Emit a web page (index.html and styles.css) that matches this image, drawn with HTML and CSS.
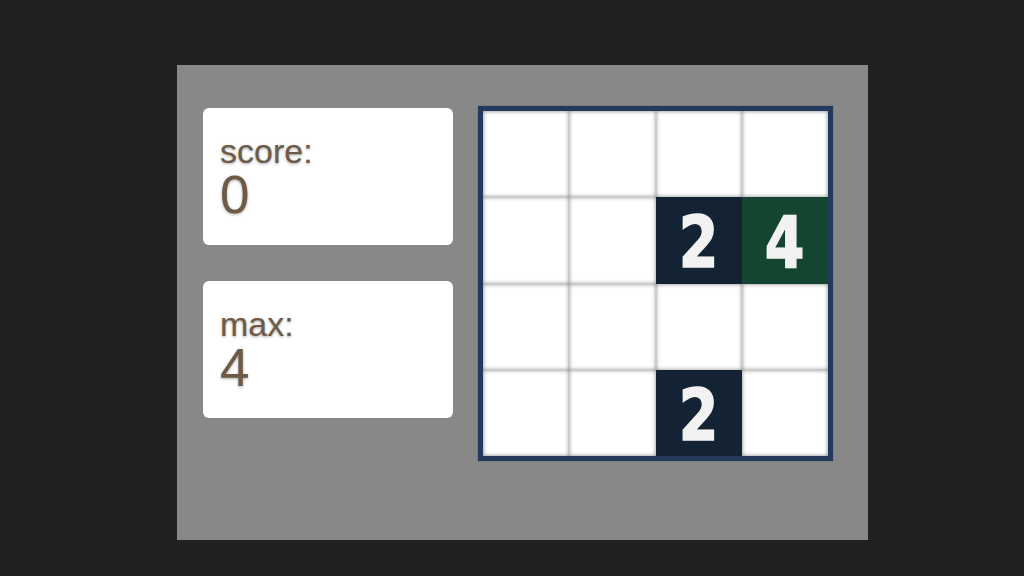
FILE: index.html
```html
<!DOCTYPE html>
<html lang="en">
<head>
    <meta charset="UTF-8">
    <meta name="viewport" content="width=device-width, initial-scale=1.0">
    <title>2048</title>
    <link rel="stylesheet" href="styles.css">
</head>
<body>
<div class="game">
    <div class="stats">
        <div class="card">
            <div class="label">score:</div>
            <div class="value">0</div>
        </div>
        <div class="card">
            <div class="label">max:</div>
            <div class="value">4</div>
        </div>
    </div>
    <div class="board">
        <div class="cell"></div>
        <div class="cell"></div>
        <div class="cell"></div>
        <div class="cell"></div>
        <div class="cell"></div>
        <div class="cell"></div>
        <div class="cell tile-2"><span>2</span></div>
        <div class="cell tile-4"><span>4</span></div>
        <div class="cell"></div>
        <div class="cell"></div>
        <div class="cell"></div>
        <div class="cell"></div>
        <div class="cell"></div>
        <div class="cell"></div>
        <div class="cell tile-2"><span>2</span></div>
        <div class="cell"></div>
    </div>
</div>
</body>
</html>
```

FILE: styles.css
```css
* {
    box-sizing: border-box;
}

body {
    font-family: 'Liberation Sans', Arial, sans-serif;
    background-color: #212121;
    margin: 0;
    padding: 65px 0 0 177px;
}

.game {
    width: 691px;
    height: 475px;
    background-color: #888888;
    padding: 41px 26px;
    display: flex;
    align-items: flex-start;
    gap: 25px;
}

.stats {
    display: flex;
    flex-direction: column;
    gap: 36px;
    padding-top: 2px;
}

.card {
    width: 250px;
    height: 137px;
    background-color: #fff;
    border-radius: 6px;
    padding: 26px 17px;
    color: #6d5a47;
    text-shadow: 0 1px 3px rgba(0, 0, 0, 0.35);
}

.label {
    font-size: 34px;
    line-height: 34px;
}

.value {
    font-size: 53px;
    line-height: 54px;
}

.board {
    width: 355px;
    height: 355px;
    border: 5px solid #25385e;
    box-shadow: 0 0 1px rgba(0, 0, 0, 0.5);
    background-color: #fff;
    display: grid;
    grid-template-columns: repeat(4, minmax(0, 1fr));
    grid-template-rows: repeat(4, minmax(0, 1fr));
}

.cell {
    background-color: #fff;
    box-shadow: inset 0 0 4px rgba(0, 0, 0, 0.5);
    display: flex;
    align-items: center;
    justify-content: center;
    font-family: 'DejaVu Sans Condensed', 'DejaVu Sans', sans-serif;
    font-weight: bold;
    font-size: 72px;
    line-height: 1;
    color: #f2f2f2;
}

.cell span {
    display: inline-block;
    transform: translateY(2px) scaleX(0.88);
    -webkit-text-stroke: 1.5px #f2f2f2;
}

.tile-2 {
    background-color: #132333;
    box-shadow: none;
}

.tile-4 {
    background-color: #134531;
    box-shadow: none;
}
```
